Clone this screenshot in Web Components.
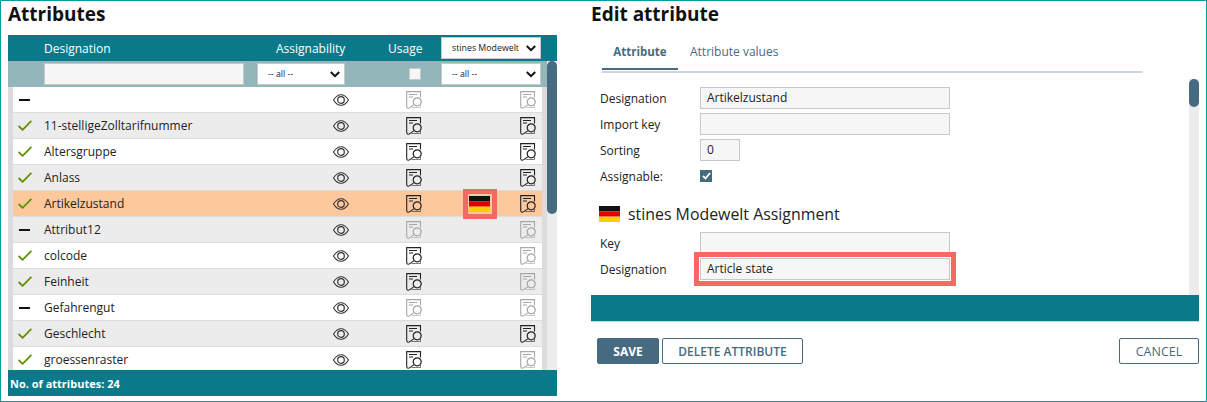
<!DOCTYPE html>
<html><head><meta charset="utf-8"><style>
html,body{margin:0;padding:0;background:#fff}
body{width:1207px;height:402px;overflow:hidden;font-family:"Open Sans","Noto Sans",sans-serif}
</style></head><body>
<app-frame>
  <attr-list slot="left"></attr-list>
  <edit-panel slot="right"></edit-panel>
</app-frame>
<script>
const ACC='#0a7a8a', SLATE='#466b80';
const ICON_DOC=`<svg width="16" height="18" viewBox="0 0 16 18" fill="none" stroke="currentColor" style="display:block"><path d="M14.5 6.5V.6H.7V15.5C.7 17 1.6 17.4 2.6 17.4" stroke-width="1.1"/><path d="M3 3.5H11M3 6H7" stroke-width="1"/><circle cx="11.2" cy="10.8" r="4" stroke-width="1.2"/><path d="M8.2 13.6L2.6 17.4" stroke-width="1.1"/><path d="M5.5 16.5H14.5V14" stroke-width="1" opacity=".6"/></svg>`;
const ICON_EYE=`<svg width="16" height="12" viewBox="0 0 16 12" fill="none" stroke="#333" style="display:block"><path d="M.5 6C2.7 2.4 5.2.7 8 .7S13.3 2.4 15.5 6C13.3 9.6 10.8 11.3 8 11.3S2.7 9.6.5 6Z" stroke-width="1.1"/><circle cx="8" cy="6" r="3.3" stroke-width="1.2"/></svg>`;
const ICON_CHECK=`<svg width="14" height="11" viewBox="0 0 14 11" fill="none" style="display:block"><path d="M.6 6L4.6 9.8L13.4 .8" stroke="#5f9000" stroke-width="1.8"/></svg>`;
const ICON_DASH=`<svg width="11" height="2" viewBox="0 0 11 2" style="display:block"><rect width="11" height="2" fill="#111"/></svg>`;
const FLAG=(w,h)=>`<svg width="${w}" height="${h}" viewBox="0 0 3 3" preserveAspectRatio="none" style="display:block"><rect width="3" height="1" fill="#111"/><rect y="1" width="3" height="1" fill="#dd0000"/><rect y="2" width="3" height="1" fill="#ffce00"/></svg>`;
const CHEV=`<svg width="10" height="7" viewBox="0 0 10 7" fill="none" style="display:block"><path d="M.8 1L5 5.2L9.2 1" stroke="#111" stroke-width="2"/></svg>`;

class AppFrame extends HTMLElement{constructor(){super();this.attachShadow({mode:'open'}).innerHTML=`<style>
:host{display:grid;grid-template-columns:549px 1fr;column-gap:34px;box-sizing:border-box;width:1207px;height:402px;border:1px solid #0a9aa5;padding:0 7px 4px 7px}
</style><slot name="left"></slot><slot name="right"></slot>`}}
customElements.define('app-frame',AppFrame);

class SelectBox extends HTMLElement{constructor(){super();const w=this.getAttribute('w');this.attachShadow({mode:'open'}).innerHTML=`<style>
:host{display:flex;align-items:center;justify-content:space-between;box-sizing:border-box;width:${w}px;height:22px;background:#fff;border:1px solid #c8c8c8;padding:0 4px 0 10px;font-size:8.8px;font-weight:400;color:#222;white-space:nowrap}
</style><span><slot></slot></span>${CHEV}`}}
customElements.define('select-box',SelectBox);

class AttrRow extends HTMLElement{constructor(){super();
 const s=this.getAttribute('state'),a=this.getAttribute('a')||'0',b=this.getAttribute('b')||'0',flag=this.hasAttribute('flag'),sel=this.hasAttribute('sel'),alt=this.hasAttribute('alt');
 const bg=sel?'#fdc89c':alt?'#ececec':'#fff';
 const doc=(v)=>`<span style="color:${v==='1'?'#222':'#a6a6a6'}">${ICON_DOC}</span>`;
 this.attachShadow({mode:'open'}).innerHTML=`<style>
:host{display:grid;grid-template-columns:31px 289px 16px 57px 16px 98px 16px 6px;align-items:center;box-sizing:border-box;height:26px;background:${bg};border-bottom:1px solid #dcdcdc;font-size:12px;color:#222}
.st{padding-left:${s==='c'?5:6}px}
.fl{padding-left:46px}
.fl i{display:block;width:21px;height:16px;padding:2px 2px 2px 1px;background:#fdc89c;outline:5px solid #f26a63;position:relative;z-index:1}
</style>
<span class="st">${s==='c'?ICON_CHECK:ICON_DASH}</span>
<span><slot></slot></span>
<span>${ICON_EYE}</span>
<span></span>
${doc(a)}
<span class="fl">${flag?`<i>${FLAG(21,16)}</i>`:''}</span>
${doc(b)}
<span></span>`}}
customElements.define('attr-row',AttrRow);

class AttrList extends HTMLElement{constructor(){super();
 const rows=[['d','','0','0'],['c','11-stelligeZolltarifnummer','1','1'],['c','Altersgruppe','1','1'],['c','Anlass','1','1'],['c','Artikelzustand','1','1','flag sel'],['d','Attribut12','0','0'],['c','colcode','1','0'],['c','Feinheit','1','0'],['d','Gefahrengut','0','0'],['c','Geschlecht','1','1'],['c','groessenraster','1','0']];
 const rh=rows.map((r,i)=>`<attr-row state="${r[0]}" a="${r[2]}" b="${r[3]}" ${r[4]||''} ${i%2&&!r[4]?'alt':''}>${r[1]}</attr-row>`).join('');
 this.attachShadow({mode:'open'}).innerHTML=`<style>
:host{display:flex;flex-direction:column;height:395px;box-sizing:border-box}
h1{margin:0;font-size:19px;font-weight:700;line-height:26px;height:34px;color:#111}
.hd{display:grid;grid-template-columns:36px 232px 112px 53px 100px 1fr;height:26px;align-items:center;background:${ACC};color:#fff;font-size:12px;flex:none}
.main{flex:1;min-height:0;display:grid;grid-template-columns:539px 10px}
.left{display:flex;flex-direction:column;min-height:0}
.fl{display:grid;grid-template-columns:36px 200px 13px 88px 64px 12px 20px 100px;height:26px;align-items:center;background:#93b6bb;flex:none}
.inp{box-sizing:border-box;height:22px;background:#f6f6f6;border:1px solid #c8c8c8}
.cb{box-sizing:border-box;width:12px;height:12px;background:#f6f6f6;border:1px solid #c8c8c8}
.wrap{flex:1;min-height:0;overflow:hidden;padding:0 5px;background:#dcdcdc}
.sb{background:#ececec}
.th{height:153px;border-radius:5px;background:${SLATE}}
.ft{height:26px;background:${ACC};color:#fff;font-size:11px;font-weight:700;display:flex;align-items:center;padding-left:2px;flex:none}
</style>
<h1>Attributes</h1>
<div class="hd"><span></span><span>Designation</span><span>Assignability</span><span>Usage</span><select-box w="100">stines Modewelt</select-box><span></span></div>
<div class="main"><div class="left">
<div class="fl"><span></span><div class="inp"></div><span></span><select-box w="88">-- all --</select-box><span></span><span class="cb"></span><span></span><select-box w="100">-- all --</select-box></div>
<div class="wrap">${rh}</div>
</div><div class="sb"><div class="th"></div></div></div>
<div class="ft">No. of attributes: 24</div>`}}
customElements.define('attr-list',AttrList);

class FormField extends HTMLElement{constructor(){super();
 const w=this.getAttribute('w')||250,hl=this.hasAttribute('hl');
 this.attachShadow({mode:'open'}).innerHTML=`<style>
:host{display:grid;grid-template-columns:100px 1fr;align-items:center;height:26px;font-size:12px;color:#222}
.v{box-sizing:border-box;height:22px;width:${w}px;background:#f6f6f6;border:1px solid #c8c8c8;padding:0 6px;line-height:20px;${hl?'box-shadow:0 0 0 1px #fff,0 0 0 6px #f26a63;':''}}
</style><span>${this.getAttribute('label')}</span><div class="v"><slot></slot></div>`}}
customElements.define('form-field',FormField);

class UiButton extends HTMLElement{constructor(){super();const p=this.hasAttribute('primary');const fw=this.getAttribute('fw')||(p?700:600);const fs=this.getAttribute('fs')||12;
 this.attachShadow({mode:'open'}).innerHTML=`<style>
:host{display:flex;align-items:center;justify-content:center;box-sizing:border-box;height:26px;width:${this.getAttribute('w')}px;border:1px solid ${SLATE};border-radius:2px;background:${p?SLATE:'#fff'};color:${p?'#fff':SLATE};font-size:${fs}px;font-weight:${fw}}
</style><slot></slot>`}}
customElements.define('ui-button',UiButton);

class EditPanel extends HTMLElement{constructor(){super();
 this.attachShadow({mode:'open'}).innerHTML=`<style>
:host{display:flex;flex-direction:column;height:396px}
h1{margin:0;font-size:19px;font-weight:700;line-height:26px;height:34px;color:#111;flex:none}
.tabs{display:flex;flex:none;margin-left:11px;width:540px;height:38px;padding-bottom:1px;border-bottom:2px solid #cdd6de;box-sizing:border-box;font-size:12px;color:${SLATE}}
.tab{display:flex;align-items:center;box-sizing:border-box;height:35px}
.t1{width:76px;justify-content:center;font-weight:700;font-size:11.5px;border-bottom:2px solid ${SLATE}}
.t2{padding-left:12px;padding-bottom:2px}
.scroll{flex:1;min-height:0;display:grid;grid-template-columns:1fr 10px;margin-top:6px}
.form{padding:6px 0 0 9px}
.row{display:grid;grid-template-columns:100px 1fr;align-items:center;height:26px;font-size:12px;color:#222}
.cbx{box-sizing:border-box;width:12px;height:12px;background:${SLATE};display:flex;align-items:center;justify-content:center}
.as{display:flex;align-items:center;gap:8px;height:26px;margin:12px 0 3px -1px;font-size:15.9px;color:#222}
.tr{background:#ececec}
.th{height:28px;background:${SLATE};border-radius:5px}
.bar{height:26px;background:${ACC};flex:none;border-bottom:1px solid #cdd6de}
.btns{display:flex;gap:3px;padding:16px 0 0 6px;flex:none;height:75px;box-sizing:border-box}
.sp{flex:1}
</style>
<h1>Edit attribute</h1>
<div class="tabs"><div class="tab t1">Attribute</div><div class="tab t2">Attribute values</div></div>
<div class="scroll"><div class="form">
<form-field label="Designation">Artikelzustand</form-field>
<form-field label="Import key"></form-field>
<form-field label="Sorting" w="40">0</form-field>
<div class="row"><span>Assignable:</span><span class="cbx"><svg width="9" height="8" viewBox="0 0 9 8" fill="none"><path d="M1 4L3.5 6.5L8 1" stroke="#fff" stroke-width="1.8"/></svg></span></div>
<div class="as">${FLAG(21,16)}<span>stines Modewelt Assignment</span></div>
<form-field label="Key"></form-field>
<form-field label="Designation" hl>Article state</form-field>
</div><div class="tr"><div class="th"></div></div></div>
<div class="bar"></div>
<div class="btns"><ui-button primary w="62">SAVE</ui-button><ui-button w="141">DELETE ATTRIBUTE</ui-button><span class="sp"></span><ui-button w="80" fw="400" fs="12.5">CANCEL</ui-button></div>`}}
customElements.define('edit-panel',EditPanel);
</script></body></html>
